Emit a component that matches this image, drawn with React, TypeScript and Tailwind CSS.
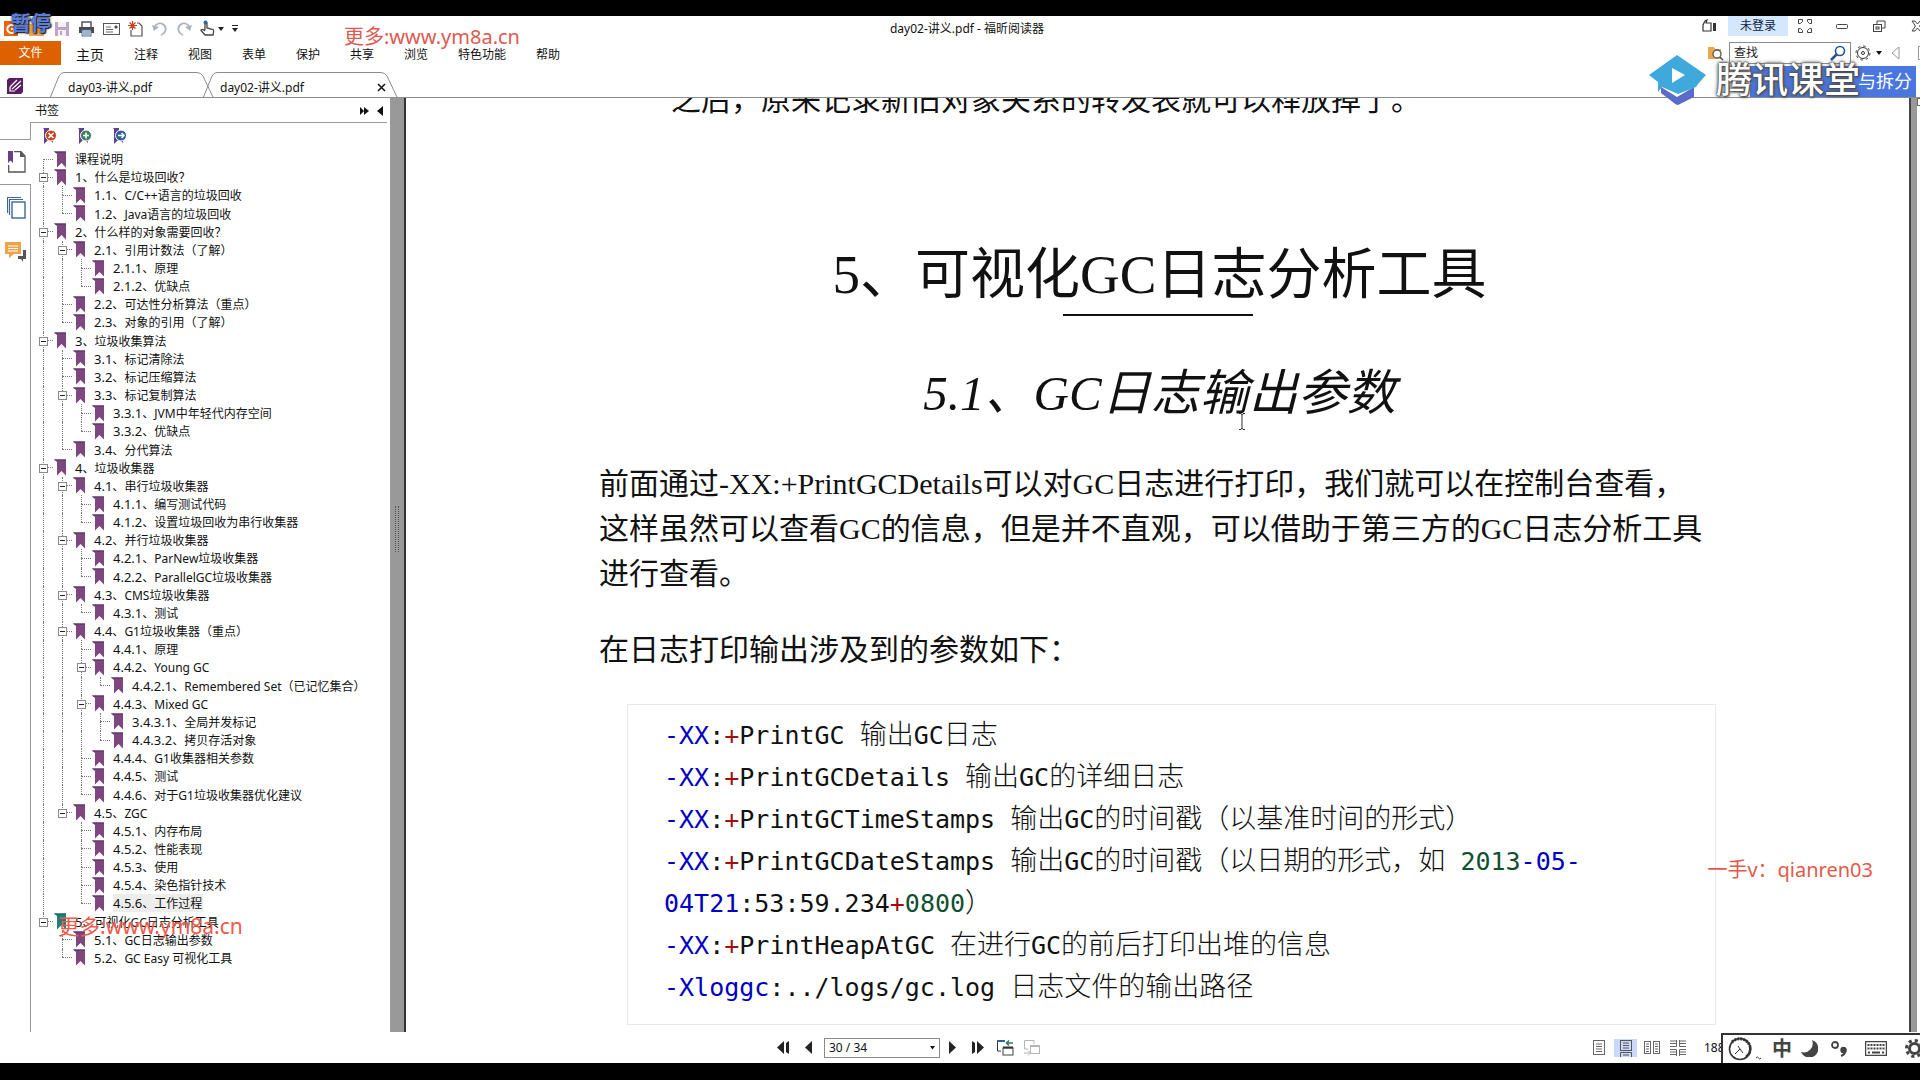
import React from 'react';

interface TextProps {
  text: string;
  latin: string;
  cjk: string;
}

// Latin runs and Chinese runs use different fonts and sizes
const MixedText: React.FC<TextProps> = ({ text, latin, cjk }) => (
  <>
    {(text.match(/[\x00-\x7f]+|[^\x00-\x7f]+/g) || []).map((run, i) => (
      <span key={i} className={run.charCodeAt(0) < 128 ? latin : cjk}>{run}</span>
    ))}
  </>
);

interface Bookmark {
  level: number;
  num: string;
  title: string;
}

const bookmarks: Bookmark[] = [
  { level: 0, num: '', title: '课程说明' },
  { level: 0, num: '1', title: '什么是垃圾回收？' },
  { level: 1, num: '1.1', title: 'C/C++语言的垃圾回收' },
  { level: 1, num: '1.2', title: 'Java语言的垃圾回收' },
  { level: 0, num: '2', title: '什么样的对象需要回收？' },
  { level: 1, num: '2.1', title: '引用计数法（了解）' },
  { level: 2, num: '2.1.1', title: '原理' },
  { level: 2, num: '2.1.2', title: '优缺点' },
  { level: 1, num: '2.2', title: '可达性分析算法（重点）' },
  { level: 1, num: '2.3', title: '对象的引用（了解）' },
  { level: 0, num: '3', title: '垃圾收集算法' },
  { level: 1, num: '3.1', title: '标记清除法' },
  { level: 1, num: '3.2', title: '标记压缩算法' },
  { level: 1, num: '3.3', title: '标记复制算法' },
  { level: 2, num: '3.3.1', title: 'JVM中年轻代内存空间' },
  { level: 2, num: '3.3.2', title: '优缺点' },
  { level: 1, num: '3.4', title: '分代算法' },
  { level: 0, num: '4', title: '垃圾收集器' },
  { level: 1, num: '4.1', title: '串行垃圾收集器' },
  { level: 2, num: '4.1.1', title: '编写测试代码' },
  { level: 2, num: '4.1.2', title: '设置垃圾回收为串行收集器' },
  { level: 1, num: '4.2', title: '并行垃圾收集器' },
  { level: 2, num: '4.2.1', title: 'ParNew垃圾收集器' },
  { level: 2, num: '4.2.2', title: 'ParallelGC垃圾收集器' },
  { level: 1, num: '4.3', title: 'CMS垃圾收集器' },
  { level: 2, num: '4.3.1', title: '测试' },
  { level: 1, num: '4.4', title: 'G1垃圾收集器（重点）' },
  { level: 2, num: '4.4.1', title: '原理' },
  { level: 2, num: '4.4.2', title: 'Young GC' },
  { level: 3, num: '4.4.2.1', title: 'Remembered Set（已记忆集合）' },
  { level: 2, num: '4.4.3', title: 'Mixed GC' },
  { level: 3, num: '3.4.3.1', title: '全局并发标记' },
  { level: 3, num: '4.4.3.2', title: '拷贝存活对象' },
  { level: 2, num: '4.4.4', title: 'G1收集器相关参数' },
  { level: 2, num: '4.4.5', title: '测试' },
  { level: 2, num: '4.4.6', title: '对于G1垃圾收集器优化建议' },
  { level: 1, num: '4.5', title: 'ZGC' },
  { level: 2, num: '4.5.1', title: '内存布局' },
  { level: 2, num: '4.5.2', title: '性能表现' },
  { level: 2, num: '4.5.3', title: '使用' },
  { level: 2, num: '4.5.4', title: '染色指针技术' },
  { level: 2, num: '4.5.6', title: '工作过程' },
  { level: 0, num: '5', title: '可视化GC日志分析工具' },
  { level: 1, num: '5.1', title: 'GC日志输出参数' },
  { level: 1, num: '5.2', title: 'GC Easy 可视化工具' },
];

const SELECTED = '4.5.6';
const CURRENT = '5';

const hasNext = (index: number, level: number) => {
  for (let i = index + 1; i < bookmarks.length; i++) {
    if (bookmarks[i].level < level) return false;
    if (bookmarks[i].level === level) return true;
  }
  return false;
};

const TreeRow: React.FC<{ index: number }> = ({ index }) => {
  const item = bookmarks[index];
  const next = bookmarks[index + 1];
  const hasChildren = !!next && next.level > item.level;
  const ancestors = Array.from({ length: item.level }, (_, l) => l);

  return (
    <li className="flex items-stretch">
      {ancestors.map((l) => (
        <span key={l} className="flex w-[19px] pl-[9px]">
          {hasNext(index, l) && <span className="border-l border-dotted border-[#777]" />}
        </span>
      ))}
      <span className="relative flex w-[19px] flex-col pl-[9px]">
        <span className={index === 0 ? 'flex-1' : 'flex-1 border-l border-dotted border-[#777]'} />
        <span className={hasNext(index, item.level) ? 'flex-1 border-l border-t border-dotted border-[#777]' : 'flex-1 border-t border-dotted border-[#777]'} />
        {hasChildren && (
          <button type="button" aria-label="折叠" className="absolute left-[5px] top-[5px] flex h-[9px] w-[9px] items-center justify-center border border-[#8a8a8a] bg-white">
            <span className="h-px w-[5px] bg-[#222]" />
          </button>
        )}
      </span>
      <svg className="mr-[2px] w-5 shrink-0 self-center" height="17" viewBox="0 0 20 17">
        <path d="M1 .5H13V16.500L8.500 12L4 16.500V3Z" fill={item.num === CURRENT ? '#1b7f80' : '#7f4780'} />
        <path d="M1 .5H13V1.500H2Z" fill={item.num === CURRENT ? '#0f5c5e' : '#553060'} />
      </svg>
      <a href="#" className={item.num === SELECTED ? 'self-center bg-[#ededed] pr-px leading-[17px]' : 'self-center leading-[17px]'}>
        {item.num && <span className="text-[13px]">{item.num}</span>}
        <span className="text-[12px]">{item.num && '、'}{item.title}</span>
      </a>
    </li>
  );
};

const BookmarkAction: React.FC<{ color: string; mark: string; label: string }> = ({ color, mark, label }) => (
  <button type="button" aria-label={label}>
    <svg width="16" height="18" viewBox="0 0 16 18">
      <path d="M1 1H7V12L4 15L2 17V2Z M8 13L11 16V14Z" fill="#64408c" />
      <circle cx="9" cy="8.500" r="5.500" fill={color} stroke="#fff" />
      <path d={mark} stroke="#fff" strokeWidth="1.500" fill="none" />
    </svg>
  </button>
);

const menus = ['注释', '视图', '表单', '保护', '共享', '浏览', '特色功能', '帮助'];

const Header: React.FC = () => (
  <header className="relative border-b border-[#8c8c8c]">
    <div className="flex h-[25px] items-center">
      <div className="flex flex-1 items-center gap-2 pl-1">
        <svg width="42" height="16" viewBox="0 0 42 16">
          <rect width="14" height="15" fill="#e8640a" />
          <path d="M10 5A4 4 0 1 0 10 11V8H7" stroke="#fff" strokeWidth="2" fill="none" />
          <path d="M25 3H32L34 5H40V15H25Z" fill="#efa84c" />
        </svg>
        <button type="button" aria-label="保存">
          <svg width="16" height="16" viewBox="0 0 16 16">
            <path d="M1 1H15V15H1Z" fill="#b9a7c4" />
            <path d="M4 1H12V6H4Z M4 9H12V15H4Z" fill="#f4f0f6" />
            <path d="M6 10H8V14H6Z" fill="#b9a7c4" />
          </svg>
        </button>
        <button type="button" aria-label="打印">
          <svg width="17" height="16" viewBox="0 0 17 16">
            <path d="M4 6V1H13V6" stroke="#555" strokeWidth="1.500" fill="#fff" />
            <path d="M1 6H16V12H1Z" fill="#4c4c4c" />
            <path d="M4 9H13V15H4Z" fill="#fff" stroke="#3f6794" />
            <path d="M5 11H12M5 13H12" stroke="#3f6794" />
          </svg>
        </button>
        <button type="button" aria-label="邮件">
          <svg width="17" height="14" viewBox="0 0 17 14">
            <rect x=".5" y="1.500" width="16" height="11" fill="#fff" stroke="#555" />
            <path d="M3 5H8M3 7.500H10M3 10H10M12 4H14V6H12Z" stroke="#666" />
          </svg>
        </button>
        <button type="button" aria-label="新建">
          <svg width="16" height="16" viewBox="0 0 16 16">
            <path d="M3 9V15H14V5L11 2H9" stroke="#555" fill="none" strokeWidth="1.200" />
            <path d="M4.500 0V9M0 4.500H9M1.500 1.500L7.500 7.500M7.500 1.500L1.500 7.500" stroke="#c8401c" strokeWidth="1.200" />
          </svg>
        </button>
        <button type="button" aria-label="撤销">
          <svg width="16" height="16" viewBox="0 0 16 16">
            <path d="M2 7C4 2 9 1 12 4S14 12 9 14" stroke="#aab4bf" strokeWidth="1.800" fill="none" />
            <path d="M0 4L2 10L7 6Z" fill="#aab4bf" />
          </svg>
        </button>
        <button type="button" aria-label="重做">
          <svg width="16" height="16" viewBox="0 0 16 16">
            <path d="M14 7C12 2 7 1 4 4S2 12 7 14" stroke="#aab4bf" strokeWidth="1.800" fill="none" />
            <path d="M16 4L14 10L9 6Z" fill="#aab4bf" />
          </svg>
        </button>
        <button type="button" aria-label="手型工具" className="flex items-center gap-[3px]">
          <svg width="15" height="17" viewBox="0 0 15 17">
            <path d="M5 10V3.500C5 2 7 2 7 3.500V8L13 9.500C14 10 14 11 13 15H5L1 10.500C1 9 3 9 5 11" stroke="#444" strokeWidth="1.300" fill="#fff" />
            <circle cx="5.500" cy="2.500" r="2" fill="#2f64a0" />
          </svg>
          <svg width="6" height="4" viewBox="0 0 6 4"><path d="M0 0H6L3 4Z" fill="#222" /></svg>
        </button>
        <button type="button" aria-label="自定义">
          <svg width="6" height="7" viewBox="0 0 6 7"><path d="M0 0H6V1H0Z M0 3H6L3 7Z" fill="#222" /></svg>
        </button>
      </div>
      <h1 className="pl-[10px] text-[12px]">day02-讲义.pdf - 福昕阅读器</h1>
      <div className="flex h-5 flex-1 items-center justify-end self-start">
        <button type="button" aria-label="点赞" className="mr-[11px]">
          <svg width="15" height="14" viewBox="0 0 15 14">
            <path d="M9 4H4L5 1L3 2L1 6V12H9Z" stroke="#333" strokeWidth="1.200" fill="none" />
            <rect x="11" y="4" width="3" height="8" fill="#333" />
          </svg>
        </button>
        <button type="button" className="mr-[10px] h-5 w-[60px] bg-[#d3e7fd] text-[12px] text-[#111a44]">未登录</button>
        <button type="button" aria-label="全屏" className="mr-6">
          <svg width="14" height="14" viewBox="0 0 14 14" fill="none" stroke="#444">
            <path d="M.5 .5H4.500V2.500L2.500 4.500H.5ZM9.500 .5H13.500V4.500H11.500L9.500 2.500ZM.5 9.500H2.500L4.500 11.500V13.500H.5ZM11.500 9.500H13.500V13.500H9.500V11.500Z" />
          </svg>
        </button>
        <button type="button" aria-label="最小化" className="mr-[25px]">
          <svg width="12" height="5" viewBox="0 0 12 5"><rect x=".5" y=".5" width="11" height="4" rx="1" fill="none" stroke="#444" /></svg>
        </button>
        <button type="button" aria-label="还原" className="mr-[25px]">
          <svg width="13" height="13" viewBox="0 0 13 13" fill="none" stroke="#444">
            <path d="M4 4V1H12V8H9" /><rect x=".5" y="4.500" width="8" height="7" /><rect x="3" y="7" width="3" height="2" />
          </svg>
        </button>
        <button type="button" aria-label="关闭" className="w-[9px] overflow-hidden">
          <svg className="max-w-none" width="13" height="12" viewBox="0 0 13 12" fill="none" stroke="#444">
            <path d="M1 1H4L6.500 4L9 1H12L8.500 6L12 11H9L6.500 8L4 11H1L4.500 6Z" />
          </svg>
        </button>
      </div>
    </div>

    <div className="flex h-[24px] items-center">
      <button type="button" className="h-full w-[61px] bg-[#de6100] text-[12px] text-white">文件</button>
      <nav className="flex flex-1 items-center gap-[30px] pl-[15px] pt-1">
        <a href="#" className="text-[14px] leading-[20px]">主页</a>
        {menus.map((menu) => (
          <a key={menu} href="#" className="text-[12px] leading-[20px]">{menu}</a>
        ))}
      </nav>
      <form className="flex items-center">
        <svg className="mr-[5px]" width="17" height="16" viewBox="0 0 17 16">
          <path d="M1 2H7L8 4H14V14H1Z" fill="#e9a84d" />
          <circle cx="10" cy="9" r="4" fill="#fff" stroke="#555" strokeWidth="1.300" />
          <path d="M13 12L16 15" stroke="#555" strokeWidth="1.500" />
        </svg>
        <label className="flex h-[22px] w-[122px] items-center border border-[#8a8a8a] px-1">
          <input type="text" aria-label="查找" placeholder="查找" className="w-full min-w-0 text-[12px] outline-none placeholder:text-[#222]" />
          <svg className="shrink-0" width="16" height="16" viewBox="0 0 16 16" fill="none" stroke="#245590">
            <circle cx="10" cy="6" r="4.500" strokeWidth="1.600" /><path d="M7 9L1 15" strokeWidth="2.500" />
          </svg>
        </label>
        <button type="button" aria-label="设置" className="ml-[4px] flex items-center gap-[5px]">
          <svg width="16" height="16" viewBox="0 0 16 16" fill="none" stroke="#333">
            <circle cx="8" cy="8" r="5.500" /><circle cx="8" cy="8" r="7" strokeDasharray="2.500 3" /><circle cx="8" cy="8" r="1.500" />
          </svg>
          <svg width="6" height="4" viewBox="0 0 6 4"><path d="M0 0H6L3 4Z" fill="#111" /></svg>
        </button>
        <button type="button" aria-label="上一个" className="ml-[9px]">
          <svg width="9" height="14" viewBox="0 0 9 14"><path d="M8 1V13L1 7Z" fill="none" stroke="#999" /></svg>
        </button>
        <span className="ml-[18px] h-[14px] w-[2px] border-y border-l border-[#999]" />
      </form>
    </div>

    <div className="flex h-8 items-end">
      <svg className="mb-[3px] ml-[7px] mr-[27px]" width="16" height="16" viewBox="0 0 16 16">
        <path d="M0 2L2 0H16V14L14 16H0Z" fill="#5a1c63" />
        <path d="M3 9L10 2M5 11L14 3M8 12L14 7M3 9V13H8" stroke="#fff" fill="none" strokeWidth="1.200" />
      </svg>
      <button type="button" className="relative flex h-[25px] w-[153px] items-center pl-[18px] pt-[6px] text-[12px]">
        <svg className="absolute left-0 top-0" width="164" height="26" viewBox="0 0 164 26" fill="none" stroke="#8c8c8c">
          <path d="M.5 25L9 4Q11 .5 14 .5H147Q151 .5 153 4L163 25" />
        </svg>
        day03-讲义.pdf
      </button>
      <button type="button" className="relative flex h-[25px] w-[195px] items-center justify-between pl-[17px] pr-[12px] pt-[6px] text-[12px]">
        <svg className="absolute left-0 top-0" width="195" height="26" viewBox="0 0 195 26" fill="none" stroke="#8c8c8c">
          <path d="M.5 25L9 4Q11 .5 14 .5H178Q182 .5 184 4L194 25" />
        </svg>
        day02-讲义.pdf
        <svg width="9" height="9" viewBox="0 0 9 9" stroke="#111" strokeWidth="1.500"><path d="M1 1L8 8M8 1L1 8" /></svg>
      </button>
    </div>

    {/* recorder caption and course site logo float above the window */}
    <span className="absolute left-[11px] -top-[3px] text-[20px] font-bold leading-[22px] text-[#5b7fe0] [text-shadow:0_0_3px_#222,0_0_2px_#222,1px_1px_1px_#222]">暂停</span>
    <span className="absolute left-[344px] top-[10px] text-[20px] leading-[22px] text-[#dc5a50]">更多:www.ym8a.cn</span>
    <div className="absolute right-[4px] top-[50px] flex h-[31px] w-[166px] items-center justify-end bg-[#4a76e0] pr-[4px] text-[18px] text-white">与拆分</div>
    <div className="absolute right-[60px] top-[37px] flex items-center gap-[9px]">
      <svg width="59" height="52" viewBox="0 0 59 52">
        <path d="M13 34L29 44L46 34V44L30 52Q28 52 26 50L13 40Z" fill="#5a6cc8" />
        <path d="M29 2L58 22L50 31L48 34L30 41L14 34L10 39V29L1 22Z" fill="#3fa9dc" />
        <path d="M24 15L37 22L24 30Z" fill="#fff" />
      </svg>
      <span className="pt-[2px] text-[36px] font-medium leading-[40px] text-white [text-shadow:0_0_2px_#333,0_0_3px_#555,0_0_5px_#666,1px_1px_2px_#444]">腾讯课堂</span>
    </div>
  </header>
);

const Sidebar: React.FC = () => (
  <aside className="flex w-[390px] shrink-0 flex-col">
    <div className="flex h-[24px] items-center pl-[35px] pr-[7px] pt-[2px] text-[12px]">
      <h2 className="flex-1">书签</h2>
      <button type="button" aria-label="展开" className="mr-[8px]">
        <svg width="9" height="8" viewBox="0 0 9 8"><path d="M0 0L4 4L0 8Z M4 0L9 4L4 8Z" fill="#111" /></svg>
      </button>
      <button type="button" aria-label="隐藏">
        <svg width="6" height="10" viewBox="0 0 6 10"><path d="M6 0V10L0 5Z" fill="#111" /></svg>
      </button>
    </div>
    <div className="flex flex-1">
      <div className="flex w-[31px] flex-col">
        <div className="h-[18px] border-b border-r border-[#999]" />
        <button type="button" aria-label="书签" className="flex h-[44px] items-center pl-[8px]">
          <svg width="18" height="22" viewBox="0 0 18 22">
            <path d="M6 .7H13L17 5V21H.7V14" stroke="#555" strokeWidth="1.300" fill="none" />
            <path d="M12 0V6H17Z" fill="#555" /><path d="M0 0H5V12L2.500 9.500L0 12Z" fill="#64408c" />
          </svg>
        </button>
        <div className="flex flex-1 flex-col items-start gap-[23px] border-r border-t border-[#999] pl-[5px] pt-[12px]">
          <button type="button" aria-label="页面" className="pl-[2px]">
            <svg width="19" height="22" viewBox="0 0 19 22" fill="#fff" stroke="#3f6794">
              <path d="M.5 16V.5H14" strokeWidth="1.200" /><path d="M2.500 18V2.500H16" strokeWidth="1.200" /><rect x="5" y="5" width="13" height="16" strokeWidth="1.400" />
            </svg>
          </button>
          <button type="button" aria-label="注释">
            <svg width="21" height="20" viewBox="0 0 21 20">
              <path d="M13 14V17H16L18 20V17H21V8H18V14Z" fill="#555" />
              <path d="M0 0H16V12H9L4 16V12H0Z" fill="#eba44c" />
              <path d="M3 4H13M3 6.500H13M3 9H13" stroke="#fff" />
            </svg>
          </button>
        </div>
      </div>
      <div className="mr-[3px] flex-1 border-t border-[#999]">
        <div className="flex gap-[19px] pl-[11px] pt-[4px]">
          <BookmarkAction label="删除书签" color="#c8461e" mark="M6.500 6L11.500 11M11.500 6L6.500 11" />
          <BookmarkAction label="添加书签" color="#3c7d64" mark="M9 5.500V11.500M6 8.500H12" />
          <BookmarkAction label="转到书签" color="#2f5f9b" mark="M6 8.500H12M9.500 6L12 8.500L9.500 11" />
        </div>
        <ul className="mt-[5px] grid h-[817px] auto-rows-fr whitespace-nowrap pl-[3px]">
          {bookmarks.map((item, i) => (
            <TreeRow key={i} index={i} />
          ))}
        </ul>
      </div>
    </div>
  </aside>
);

interface Token {
  text: string;
  color?: string;
}

const BLUE = 'text-[#0000c0]';
const RED = 'text-[#a01010]';
const GREEN = 'text-[#0f5030]';

const codeLines: Token[][] = [
  [{ text: '-XX', color: BLUE }, { text: ':' }, { text: '+', color: RED }, { text: 'PrintGC 输出GC日志' }],
  [{ text: '-XX', color: BLUE }, { text: ':' }, { text: '+', color: RED }, { text: 'PrintGCDetails 输出GC的详细日志' }],
  [{ text: '-XX', color: BLUE }, { text: ':' }, { text: '+', color: RED }, { text: 'PrintGCTimeStamps 输出GC的时间戳（以基准时间的形式）' }],
  [{ text: '-XX', color: BLUE }, { text: ':' }, { text: '+', color: RED }, { text: 'PrintGCDateStamps 输出GC的时间戳（以日期的形式，如 ' }, { text: '2013', color: GREEN }, { text: '-05-', color: BLUE }],
  [{ text: '04T21', color: BLUE }, { text: ':53:59.234' }, { text: '+', color: RED }, { text: '0800', color: GREEN }, { text: '）' }],
  [{ text: '-XX', color: BLUE }, { text: ':' }, { text: '+', color: RED }, { text: 'PrintHeapAtGC 在进行GC的前后打印出堆的信息' }],
  [{ text: '-Xloggc', color: BLUE }, { text: ':../logs/gc.log 日志文件的输出路径' }],
];

const Document: React.FC = () => (
  <main className="flex flex-1 overflow-hidden">
    <article className="relative flex-1 font-['Liberation_Serif','Noto_Sans_CJK_SC',serif] text-[#111]">
      <div className="mx-auto w-[1117px] whitespace-nowrap text-[30px] leading-[45px]">
        <p className="-mt-[21px] pl-[72px]">之后，原来记录新旧对象关系的转发表就可以释放掉了。</p>
        <h2 className="mt-[117px] pl-1 text-center text-[55px] leading-[72px]">5、可视化GC日志分析工具</h2>
        <hr className="mx-auto mt-[3px] h-[2px] w-[190px] border-0 bg-[#111]" />
        <h3 className="mt-[46px] pl-1 text-center text-[49px] italic leading-[64px]">5.1、GC日志输出参数</h3>
        <p className="mt-[35px]">
          前面通过-XX:+PrintGCDetails可以对GC日志进行打印，我们就可以在控制台查看，<br />
          这样虽然可以查看GC的信息，但是并不直观，可以借助于第三方的GC日志分析工具<br />
          进行查看。
        </p>
        <p className="mt-[31px]">在日志打印输出涉及到的参数如下：</p>
        <pre className="ml-[28px] mt-[32px] border border-[#e8e8e8] pb-[17px] pl-[36px] pt-[8px] font-['DejaVu_Sans_Mono','Noto_Sans_CJK_SC',monospace] leading-[42px]">
          {codeLines.map((line, i) => (
            <div key={i} className="h-[42px]">
              {line.map((token, j) => (
                <span key={j} className={token.color}>
                  <MixedText text={token.text} latin="text-[25px]" cjk="text-[27px] font-light" />
                </span>
              ))}
            </div>
          ))}
        </pre>
      </div>
      <svg className="absolute left-[832px] top-[315px]" width="8" height="17" viewBox="0 0 8 17" fill="none" stroke="#333">
        <path d="M1 .5H3L4 2L5 .5H7M4 2V15M1 16.500H3L4 15L5 16.500H7" />
      </svg>
      <span className="absolute right-[36px] top-[758px] font-['Noto_Sans','Noto_Sans_CJK_SC',sans-serif] text-[20px] leading-[28px] text-[#e05a4a]">一手v：qianren03</span>
    </article>
    <div className="w-[8px] border-l-2 border-[#444] bg-[#999]" />
    <div className="w-[3px]">
      <div className="h-2 border-y border-l border-[#666]" />
    </div>
  </main>
);

const Footer: React.FC = () => (
  <footer className="flex h-[31px] items-center overflow-hidden">
    <div className="flex flex-1 items-center justify-end">
      <button type="button" aria-label="第一页" className="mr-[15px]">
        <svg width="13" height="13" viewBox="0 0 13 13"><path d="M7 0V13L0 6.500Z M9 2L12 0V13L9 11Z" fill="#222" /></svg>
      </button>
      <button type="button" aria-label="上一页" className="mr-[12px]">
        <svg width="7" height="13" viewBox="0 0 7 13"><path d="M7 0V13L0 6.500Z" fill="#222" /></svg>
      </button>
      <div className="relative mr-[9px]">
        <select aria-label="页码" className="block h-[20px] w-[116px] appearance-none border border-[#8a8a8a] bg-white pl-1 text-[12px] leading-[16px]">
          <option>30 / 34</option>
        </select>
        <svg className="pointer-events-none absolute right-[5px] top-[8px]" width="5" height="4" viewBox="0 0 5 4"><path d="M0 0H5L2.500 3.500Z" fill="#111" /></svg>
      </div>
      <button type="button" aria-label="下一页" className="mr-[16px]">
        <svg width="7" height="13" viewBox="0 0 7 13"><path d="M0 0V13L7 6.500Z" fill="#222" /></svg>
      </button>
      <button type="button" aria-label="最后一页" className="mr-[12px]">
        <svg width="13" height="13" viewBox="0 0 13 13"><path d="M5 0V13L12 6.500Z M3 2L0 0V13L3 11Z" fill="#222" /></svg>
      </button>
      <button type="button" aria-label="后退视图" className="mr-[10px]">
        <svg width="17" height="16" viewBox="0 0 17 16" fill="none">
          <path d="M4 11H.5V.5H7" stroke="#333" /><path d="M0 1H8" stroke="#2f64a0" strokeWidth="2" />
          <rect x="6" y="8" width="10" height="7" stroke="#444" /><path d="M6 7.500H16" stroke="#333" strokeWidth="2" />
          <path d="M16 3H10M12 .5L9.500 3L12 5.500" stroke="#2c7a5c" strokeWidth="1.500" />
        </svg>
      </button>
      <button type="button" aria-label="前进视图">
        <svg width="17" height="16" viewBox="0 0 17 16" fill="none" stroke="#b4b4b4">
          <path d="M4 9H.5V.5H10V4" /><rect x="6.500" y="6.500" width="9" height="7" /><path d="M6 6H16" strokeWidth="2" /><path d="M0 13H6M4 10.500L6.500 13L4 15.500" />
        </svg>
      </button>
    </div>
    <div className="flex w-[879px] items-center justify-end">
      <button type="button" aria-label="单页" className="mr-[9px]">
        <svg width="12" height="15" viewBox="0 0 12 15" fill="none" stroke="#666"><rect x=".5" y=".5" width="11" height="14" /><path d="M3 4H9M3 6.500H9M3 9H9M3 11.500H9" /></svg>
      </button>
      <button type="button" aria-label="连续" className="mr-[7px] flex h-[18px] w-[23px] justify-center bg-[#cbd7fb]">
        <svg width="12" height="18" viewBox="0 0 12 18" fill="none" stroke="#555"><rect x=".5" y="1.500" width="11" height="10" /><path d="M3 4H9M3 6.500H9M3 9H9M.5 18V13.500H11.500V18M3 16H9" /></svg>
      </button>
      <button type="button" aria-label="双页" className="mr-[10px]">
        <svg width="16" height="15" viewBox="0 0 16 15" fill="none" stroke="#666"><rect x=".5" y="1.500" width="6" height="12" /><rect x="9.500" y="1.500" width="6" height="12" /><path d="M2 4H5M2 6.500H5M2 9H5M2 11.500H5M11 4H14M11 6.500H14M11 9H14M11 11.500H14" /></svg>
      </button>
      <button type="button" aria-label="连续双页" className="mr-[18px]">
        <svg width="16" height="16" viewBox="0 0 16 16" fill="none" stroke="#666"><path d="M0 1H6M0 3.500H6M0 6.500H6.500V0M16 1H10M16 3.500H10M16 6.500H9.500V0M0 9.500H6.500V16M0 12H6M0 14.500H6M16 9.500H9.500V16M16 12H10M16 14.500H10" /></svg>
      </button>
      <span className="w-[17px] overflow-hidden text-[12px]">188%</span>
      <div className="flex h-[30px] w-[199px] items-center self-end overflow-hidden border-l-2 border-t-2 border-[#333] pl-[5px] text-[#444]">
        <svg className="mr-[11px] shrink-0" width="33" height="24" viewBox="0 0 33 24" fill="none" stroke="#333">
          <circle cx="12" cy="12" r="10.500" strokeWidth="1.600" /><path d="M4 5A11 11 0 0 1 22 9" strokeWidth="3" strokeDasharray="2 1" /><path d="M22 9A11 11 0 0 1 18 20" strokeWidth="2.500" /><path d="M7 17L12 12L10 9M12 12L15 16" />
          <path d="M28 21Q29.500 19 30.500 21T33 21" />
        </svg>
        <span className="mr-[9px] shrink-0 text-[20px] font-bold leading-[24px]">中</span>
        <svg className="mr-[13px] shrink-0" width="17" height="17" viewBox="0 0 17 17"><path d="M11 0A9 9 0 0 1 0 12A9 9 0 1 0 11 0Z" fill="#444" /></svg>
        <svg className="mr-[17px] shrink-0" width="17" height="17" viewBox="0 0 17 17"><circle cx="4" cy="5" r="3" fill="none" stroke="#444" strokeWidth="1.800" /><circle cx="12.500" cy="10" r="3.200" fill="#444" /><path d="M14.500 9Q15 14 10 16" fill="none" stroke="#444" strokeWidth="2" /></svg>
        <svg className="mr-[18px] shrink-0" width="22" height="15" viewBox="0 0 22 15"><rect x=".5" y=".5" width="21" height="14" fill="#fff" stroke="#444" strokeWidth="1.500" /><path d="M2.500 4H20M2.500 7.500H20" stroke="#444" strokeWidth="2" strokeDasharray="2 1" /><path d="M3 11.500H5M7 11.500H15M17 11.500H19" stroke="#444" strokeWidth="2" /></svg>
        <svg className="shrink-0" width="19" height="19" viewBox="0 0 19 19" fill="none" stroke="#444"><circle cx="9.500" cy="9.500" r="5" strokeWidth="3" /><circle cx="9.500" cy="9.500" r="8" strokeWidth="3" strokeDasharray="3.200 3.080" /></svg>
      </div>
    </div>
  </footer>
);

const App: React.FC = () => (
  <div className="flex min-h-screen flex-col overflow-hidden bg-black pb-[17px] pt-4 font-['Noto_Sans','Noto_Sans_CJK_SC',sans-serif] text-[#111]">
    <div className="relative flex flex-1 flex-col bg-white">
      <Header />
      <div className="flex flex-1">
        <Sidebar />
        <div className="flex w-4 shrink-0 items-center justify-center border-r-2 border-[#333] bg-[#999] pb-[72px]">
          <span className="h-[46px] w-[4px] border-x border-dotted border-[#555]" />
        </div>
        <Document />
      </div>
      <Footer />
      <span className="absolute left-[58px] top-[895px] text-[21px] leading-[30px] text-[#ee5a4c]">更多:www.ym8a.cn</span>
    </div>
  </div>
);

export default App;
